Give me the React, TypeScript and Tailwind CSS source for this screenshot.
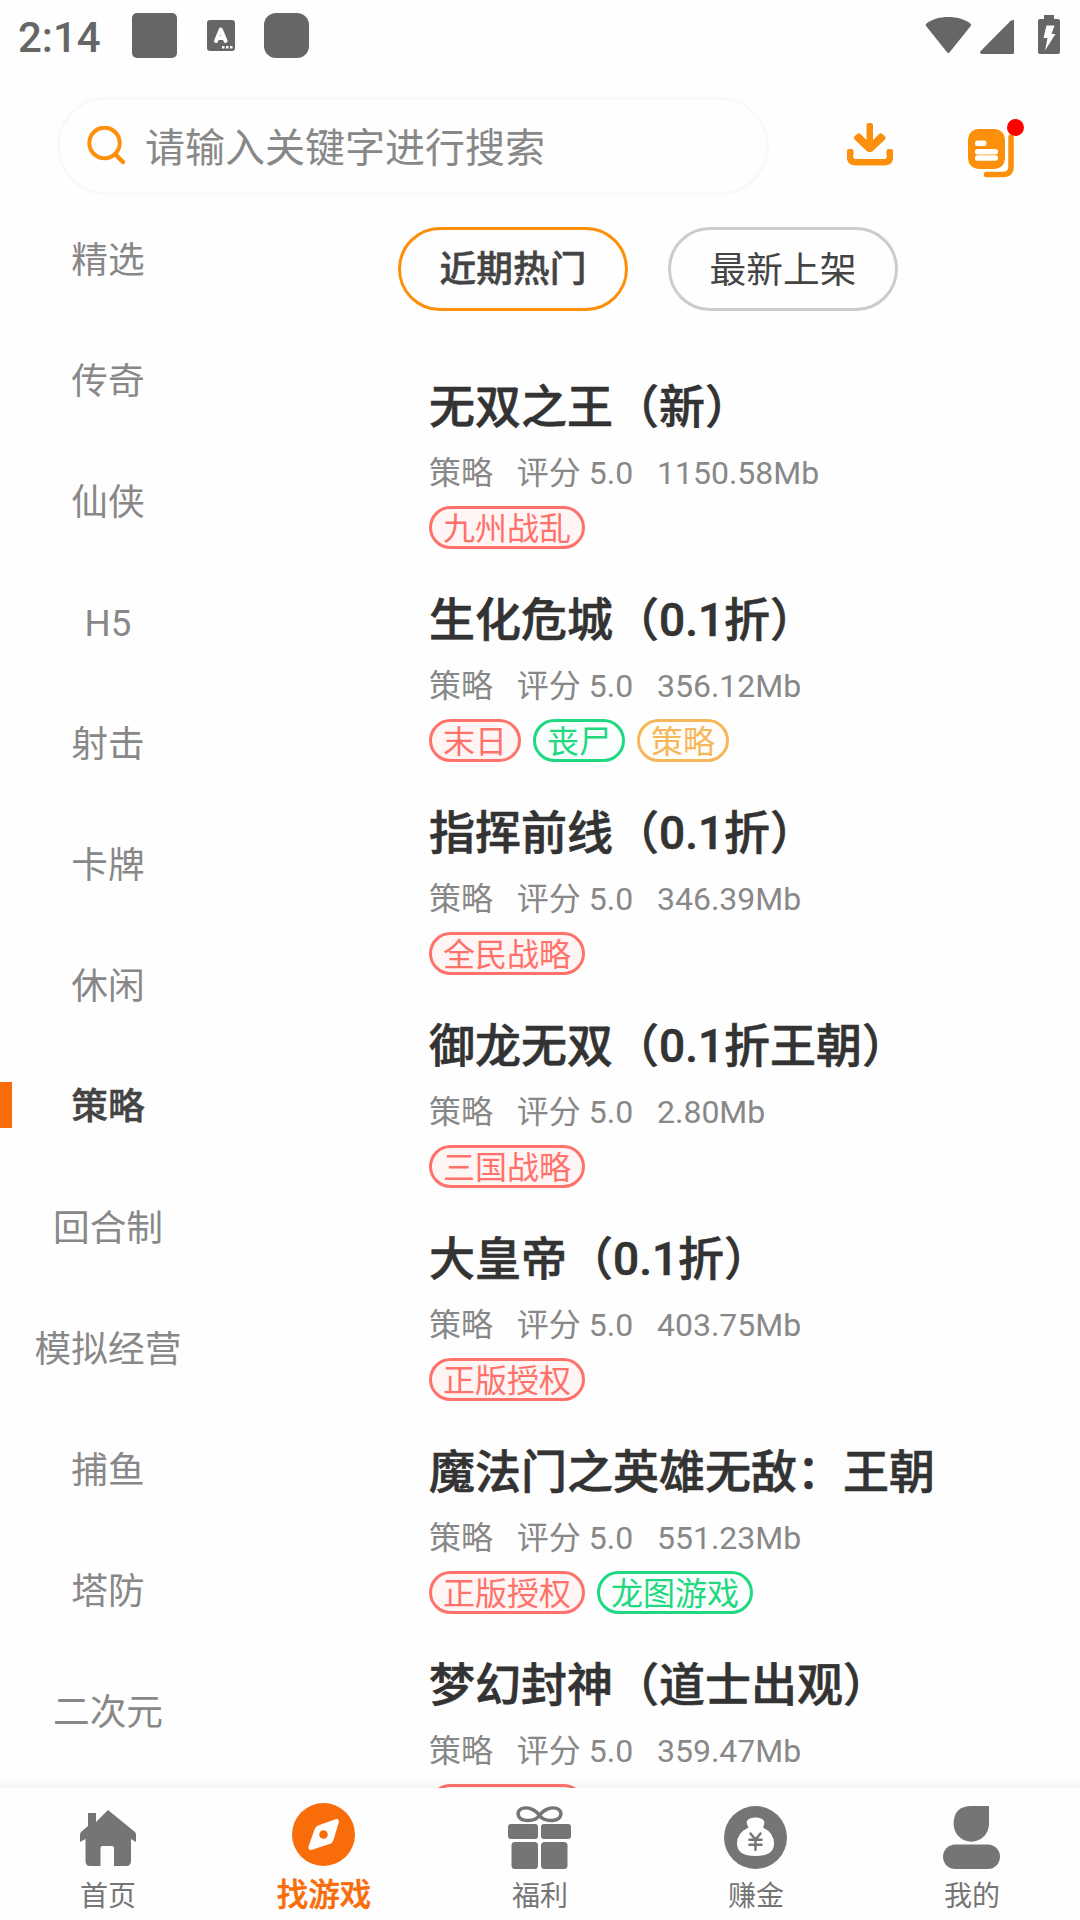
import React from 'react';

type TagColor = 'red' | 'green' | 'yellow';

interface GameTag {
  label: string;
  color: TagColor;
}

interface Game {
  title: string;
  size: string;
  tags: GameTag[];
}

const CATEGORIES = [
  '精选', '传奇', '仙侠', 'H5', '射击', '卡牌', '休闲', '策略',
  '回合制', '模拟经营', '捕鱼', '塔防', '二次元',
];

const GAMES: Game[] = [
  { title: '无双之王（新）', size: '1150.58Mb', tags: [{ label: '九州战乱', color: 'red' }] },
  {
    title: '生化危城（0.1折）',
    size: '356.12Mb',
    tags: [
      { label: '末日', color: 'red' },
      { label: '丧尸', color: 'green' },
      { label: '策略', color: 'yellow' },
    ],
  },
  { title: '指挥前线（0.1折）', size: '346.39Mb', tags: [{ label: '全民战略', color: 'red' }] },
  { title: '御龙无双（0.1折王朝）', size: '2.80Mb', tags: [{ label: '三国战略', color: 'red' }] },
  { title: '大皇帝（0.1折）', size: '403.75Mb', tags: [{ label: '正版授权', color: 'red' }] },
  {
    title: '魔法门之英雄无敌：王朝',
    size: '551.23Mb',
    tags: [
      { label: '正版授权', color: 'red' },
      { label: '龙图游戏', color: 'green' },
    ],
  },
  { title: '梦幻封神（道士出观）', size: '359.47Mb', tags: [{ label: '\u3000\u3000\u3000\u3000', color: 'red' }] },
];

const TAG_STYLES: Record<TagColor, string> = {
  red: 'border-[#ff726b] bg-[#fff5f4] text-[#ff726b]',
  green: 'border-[#1fd880] bg-[#fafffd] text-[#1fd880]',
  yellow: 'border-[#f6b75b] bg-[#fffdfa] text-[#f6b75b]',
};

const StatusBar: React.FC = () => (
  <div className="flex h-[73px] shrink-0 items-start text-[#666]">
    <span className="ml-[18px] mt-[13px] w-[114px] text-[42px] font-medium leading-[50px]">2:14</span>
    <div className="mt-[13px] size-[45px] rounded-[5px] bg-[#666]" />
    <svg className="ml-[30px] mt-[20px]" width="28" height="31" viewBox="0 0 28 31">
      <rect width="28" height="31" rx="3" fill="#666" />
      <path d="M9 21 13.8 9.500 18.600 21M10.500 18h6.500" fill="none" stroke="#fff" strokeWidth="4" strokeLinecap="round" strokeLinejoin="round" />
      <path d="M15 26h2.500v2.500H15zM19 26h2.500v2.500H19zM23 26h2.500v2.500H23z" fill="#fff" />
    </svg>
    <div className="ml-[29px] mt-[13px] size-[45px] rounded-[12px] bg-[#666]" />
    <svg className="ml-[616px] mt-[17px]" width="47" height="36" viewBox="0 0 47 36">
      <path d="M1.300 9.300Q0 7.700 1.800 6.300C7.500 2 15 0 23.300 0s16 2 21.700 6.300q1.800 1.400.5 3L24.800 35q-1.500 1.800-3 0Z" fill="#666" />
    </svg>
    <svg className="ml-[8px] mt-[20px]" width="34" height="34" viewBox="0 0 34 34">
      <path d="M30.700.7Q32 0 34 0V32.500Q34 34 32.500 34H2Q0 34 0 31.700Z" fill="#666" />
    </svg>
    <svg className="ml-[24px] mt-[15px]" width="22" height="39" viewBox="0 0 22 39">
      <path d="M6 0h10v4h4q2 0 2 2v31q0 2-2 2H2q-2 0-2-2V6q0-2 2-2h4Z" fill="#666" />
      <path d="M8.500 10.500h8l-3 8.500H17.500L7 35.500 9.500 23H5.500Z" fill="#fefefe" />
    </svg>
  </div>
);

const SearchHeader: React.FC = () => (
  <div className="flex h-[126px] shrink-0 items-start">
    <div className="ml-[57px] mt-[24px] flex h-[98px] w-[712px] items-center rounded-full border-[3px] border-[#f9f9f9] pl-[27px]">
      <svg width="40" height="40" viewBox="0 0 40 40" className="-mt-px">
        <circle cx="17.500" cy="17" r="15.200" fill="none" stroke="#fd8f0b" strokeWidth="4" />
        <path d="m28.500 28.500 7.500 7.500" stroke="#fd8f0b" strokeWidth="4.500" strokeLinecap="round" />
      </svg>
      <span className="ml-[18px] mt-[6px] text-[40px] leading-[60px] text-[#888]">请输入关键字进行搜索</span>
    </div>
    <svg className="ml-[78px] mt-[50px]" width="46" height="43" viewBox="0 0 46 43">
      <path d="M3 29V33.500Q3 39.300 8.500 39.300h29Q43 39.300 43 33.500V29" fill="none" stroke="#fc900c" strokeWidth="6.500" />
      <path d="M0 28q0-2 2-2h2.500q2 0 2 2v3H0ZM39.500 28q0-2 2-2H44q2 0 2 2v3h-6.500Z" fill="#fc900c" />
      <path d="M19.500 2q0-2 2-2h2.500q2 0 2 2v15l6-6q1.700-1.700 3.300 0l2.700 2.200q1.500 1.500 0 3.200L25.500 28.200q-2.700 2.200-5.500 0L7.500 16.400q-1.500-1.700 0-3.200L10.200 11q1.600-1.700 3.300 0l6 6Z" fill="#fc900c" />
    </svg>
    <div className="relative ml-[75px] mt-[56px]">
      <svg width="46" height="49" viewBox="0 0 46 49">
        <rect width="37" height="40" rx="10.500" fill="#fc900c" />
        <rect x="7" y="11.500" width="11.500" height="5.500" rx="2.500" fill="#fff" />
        <rect x="7" y="20" width="23" height="5.500" rx="2.500" fill="#fff" />
        <rect x="7" y="26.200" width="23" height="5.500" rx="2.500" fill="#fff" />
        <path d="M18.500 45.500H35Q43 45.500 43 37.500V8" fill="none" stroke="#fc900c" strokeWidth="5.500" strokeLinecap="round" />
      </svg>
      <span className="absolute -top-[10px] left-[39px] size-[17px] rounded-full bg-[#f00]" />
    </div>
  </div>
);

const CategoryList: React.FC<{ active: string }> = ({ active }) => (
  <nav className="w-[216px] shrink-0">
    {CATEGORIES.map((category) => (
      <div key={category} className="flex h-[121px] items-center">
        <span className={category === active ? 'mb-[3px] h-[46px] w-[12px] bg-[#f86d09]' : 'w-[12px]'} />
        <span
          className={
            category === active
              ? 'w-[192px] pt-px text-center text-[36.7px] font-medium text-[#444] [-webkit-text-stroke:0.5px_#444]'
              : 'w-[192px] pt-[2px] text-center text-[36.7px] text-[#888]'
          }
        >
          {category}
        </span>
      </div>
    ))}
  </nav>
);

const GameRow: React.FC<{ game: Game }> = ({ game }) => (
  <div className="h-[213px] pl-[213px]">
    <h3 className="h-[62px] whitespace-nowrap text-[46px] font-medium leading-[62px] text-[#333] [-webkit-text-stroke:0.6px_#333]">
      {game.title}
    </h3>
    <p className="mt-[13px] h-[44px] whitespace-pre text-[32px] leading-[44px] text-[#888]">
      {`策略   评分 5.0   ${game.size}`}
    </p>
    <div className="mt-[11px] flex gap-[12px]">
      {game.tags.map((tag) => (
        <span
          key={tag.label}
          className={`flex h-[43px] items-center rounded-full border-[3px] px-[11px] pt-[3px] text-[32px] leading-[37px] ${TAG_STYLES[tag.color]}`}
        >
          {tag.label}
        </span>
      ))}
    </div>
  </div>
);

const HomeIcon = () => (
  <svg width="56" height="56" viewBox="0 0 56 56">
    <path d="M8 3h8v9L28 0l27 22q1 1 1 3v7l-5-3v22q0 5-5 5H34V38q0-2-2-2H22.500q-2 0-2 2v18H10q-4.500 0-4.500-5V29L0 32v-7q0-2 1-3l7-6Z" fill="#757575" />
  </svg>
);

const CompassIcon = () => (
  <svg width="63" height="63" viewBox="0 0 63 63">
    <circle cx="31.500" cy="31.500" r="31.500" fill="#f86d09" />
    <path d="M26 22.500 43.500 16.200Q47.300 15.500 46.800 19.200L41.500 37Q40.500 40 37.500 41L20 46.800Q15.800 47.500 16.500 43.500L22.500 26.500Q23.500 23.500 26 22.500Z" fill="#fff" />
    <circle cx="31.500" cy="31.500" r="4.300" fill="#f86d09" />
  </svg>
);

const GiftIcon = () => (
  <svg width="63" height="63" viewBox="0 0 63 63">
    <g fill="none" stroke="#757575" strokeWidth="3.400">
      <path d="M31.500 9.500C28 4 20 .5 14 2.500 8 5 9 13 17 14.300c7 .8 12-1.300 14.500-4.800Z" />
      <path d="M31.500 9.500C35 4 43 .5 49 2.500c6 2.500 5 10.500-3 11.800-7 .8-12-1.300-14.500-4.800Z" />
    </g>
    <g fill="#757575">
      <rect x="0" y="18" width="30" height="15" rx="3" />
      <rect x="33" y="18" width="30" height="15" rx="3" />
      <rect x="3.500" y="36" width="26.500" height="27" rx="3.500" />
      <rect x="33" y="36" width="26.500" height="27" rx="3.500" />
    </g>
  </svg>
);

const MoneyIcon = () => (
  <svg width="63" height="63" viewBox="0 0 63 63">
    <circle cx="31.500" cy="31.500" r="31.500" fill="#757575" />
    <path d="M23 15q2-3.500 8.500-3.500T40 15q1 2-1 6.500Q50 27 50 37.500 50 50 31.500 50T13 37.500Q13 27 24.500 21.500 22 17 23 15Z" fill="#fff" />
    <path d="m26.500 27.500 5 6 5-6M25.500 33.700h12M25.500 38.700h12M31.500 33.700v10" fill="none" stroke="#757575" strokeWidth="2.500" strokeLinecap="round" />
  </svg>
);

const UserIcon = () => (
  <svg width="57" height="63" viewBox="0 0 57 63">
    <path d="M28.500 0H46v18a17.700 17.700 0 1 1-35.400 0Q10.600 0 28.500 0Z" fill="#757575" />
    <rect y="38.500" width="57" height="24.500" rx="12.250" fill="#757575" />
  </svg>
);

const TABS = [
  { label: '首页', icon: <HomeIcon />, top: 'pt-[22px]' },
  { label: '找游戏', icon: <CompassIcon />, top: 'pt-[15px]', active: true },
  { label: '福利', icon: <GiftIcon />, top: 'pt-[18px]' },
  { label: '赚金', icon: <MoneyIcon />, top: 'pt-[18px]' },
  { label: '我的', icon: <UserIcon />, top: 'pt-[18px]' },
];

const TabBar: React.FC = () => (
  <footer className="flex h-[132px] shrink-0 bg-[#fefefe]">
    {TABS.map((tab) => (
      <div key={tab.label} className="flex w-[216px] flex-col items-center">
        <div className={`h-[87px] pr-px ${tab.top}`}>{tab.icon}</div>
        <span
          className={
            tab.active
              ? 'text-[31.5px] font-medium leading-[41px] text-[#f86d09] [-webkit-text-stroke:0.5px_#f86d09]'
              : 'text-[28px] leading-[43px] text-[#757575]'
          }
        >
          {tab.label}
        </span>
      </div>
    ))}
  </footer>
);

export default function App() {
  return (
    <div className="flex h-[1920px] w-[1080px] flex-col overflow-hidden bg-[#fefefe] font-['Roboto','Noto_Sans_CJK_SC',sans-serif]">
      <StatusBar />
      <SearchHeader />
      <main className="relative flex min-h-0 flex-1 overflow-hidden">
        <CategoryList active="策略" />
        <section className="flex-1">
          <div className="ml-[182px] mt-[28px] flex gap-[40px] text-[36.7px] text-[#444]">
            <button className="h-[84px] w-[230px] rounded-full border-[3px] border-[#fd8f0b] pt-[2px] font-medium [-webkit-text-stroke:0.5px_#444]">
              近期热门
            </button>
            <button className="h-[84px] w-[230px] rounded-full border-[3px] border-[#ccc] pt-[3px]">最新上架</button>
          </div>
          <div className="mt-[65px]">
            {GAMES.map((game) => (
              <GameRow key={game.title} game={game} />
            ))}
          </div>
        </section>
        <div className="absolute inset-x-0 bottom-0 h-[8px] bg-linear-to-t from-black/4 to-transparent" />
      </main>
      <TabBar />
    </div>
  );
}
